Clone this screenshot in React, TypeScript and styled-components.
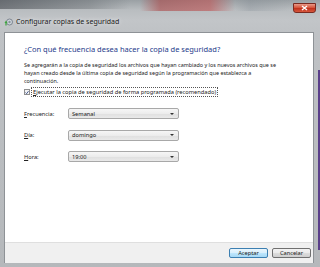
import React from "react";
import styled, { createGlobalStyle } from "styled-components";

const Global = createGlobalStyle`
  html, body { margin: 0; padding: 0; background: #6d7378; }
  * { box-sizing: border-box; }
`;

const Window = styled.div`
  width: 320px;
  height: 267px;
  display: flex;
  flex-direction: column;
  padding: 0 6px 4px 4px;
  font-family: "Noto Sans", "DejaVu Sans", sans-serif;
  background:
    linear-gradient(90deg, rgba(60,64,70,0.55) 0px, rgba(90,95,100,0.35) 90px, rgba(200,200,200,0) 130px) 0 0 / 100% 9px no-repeat,
    linear-gradient(90deg, rgba(0,0,0,0) 140px, rgba(170,60,60,0.55) 160px, rgba(190,80,80,0.6) 210px, rgba(0,0,0,0) 235px, rgba(120,130,140,0.25) 250px, rgba(0,0,0,0) 290px) 0 0 / 100% 11px no-repeat,
    linear-gradient(180deg, #9aa0a4 0px, #b9bdc0 10px, #c2c5c8 20px, #bfc2c5 32px, #b5b8bb 100%);
  position: relative;
  overflow: hidden;
`;

const PurpleStripe = styled.div`
  position: absolute;
  right: 0;
  top: 70px;
  width: 2px;
  height: 180px;
  background: #5a3f8a;
`;

const TitleBar = styled.div`
  height: 32px;
  display: flex;
  align-items: flex-end;
  padding: 0 0 6px 0;
  gap: 3px;
  position: relative;
`;

const TitleText = styled.span`
  font-size: 7px;
  color: #1b1b1b;
  line-height: 9px;
  text-shadow: 0 0 4px rgba(255,255,255,0.9);
`;

const CloseButton = styled.div`
  position: absolute;
  right: -2px;
  top: 3px;
  width: 23px;
  height: 10px;
  border-radius: 0 0 3px 3px;
  border: 1px solid #7a2a20;
  background: linear-gradient(180deg, #e99a88 0%, #d6553c 45%, #c2321c 55%, #d6573e 100%);
  display: flex;
  align-items: center;
  justify-content: center;
`;

const Content = styled.div`
  flex: 1;
  background: #ffffff;
  display: flex;
  flex-direction: column;
  border: 1px solid #8e9296;
  border-bottom: none;
`;

const Main = styled.div`
  flex: 1;
  padding: 11px 10px 0 19px;
  display: flex;
  flex-direction: column;
`;

const Heading = styled.div`
  font-size: 7.5px;
  color: #1e3a8a;
  line-height: 10px;
  margin-bottom: 7px;
`;

const Body = styled.div`
  font-size: 5.4px;
  color: #222;
  line-height: 8px;
  margin-bottom: 3px;
  white-space: nowrap;
`;

const CheckRow = styled.div`
  display: flex;
  align-items: center;
  gap: 2px;
  margin-bottom: 12px;
`;

const CheckBox = styled.div`
  width: 6px;
  height: 6px;
  border: 1px solid #8f8f8f;
  background: #f4f4f4;
  display: flex;
  align-items: center;
  justify-content: center;
`;

const CheckLabel = styled.span`
  font-size: 5.7px;
  color: #222;
  line-height: 8px;
  padding: 0 1px;
  outline: 1px dotted #555;
`;

const FieldRow = styled.div`
  display: flex;
  align-items: center;
  height: 11px;
  margin-bottom: 10.5px;
`;

const FieldLabel = styled.span`
  width: 44px;
  font-size: 5.7px;
  color: #222;
`;

const Select = styled.div`
  width: 111px;
  height: 11px;
  border: 1px solid #a8a8a8;
  border-radius: 2px;
  background: linear-gradient(180deg, #f6f6f6 0%, #ececec 50%, #dfdfdf 51%, #e9e9e9 100%);
  display: flex;
  align-items: center;
  justify-content: space-between;
  padding: 0 4px 0 3px;
  font-size: 5.7px;
  color: #222;
`;

const Arrow = styled.div`
  width: 0;
  height: 0;
  border-left: 2px solid transparent;
  border-right: 2px solid transparent;
  border-top: 2px solid #333;
`;

const Footer = styled.div`
  height: 21px;
  background: #f0f0f0;
  border-top: 1px solid #dfdfdf;
  display: flex;
  align-items: center;
  justify-content: flex-end;
  gap: 4px;
  padding: 0 2px 0 0;
`;

const Button = styled.div<{ $default?: boolean }>`
  width: 39px;
  height: 10px;
  border: 1px solid ${(p) => (p.$default ? "#3c7fb1" : "#707070")};
  border-radius: 2px;
  background: ${(p) =>
    p.$default
      ? "linear-gradient(180deg, #eaf6fd 0%, #d9f0fc 50%, #bee6fd 51%, #a7d9f5 100%)"
      : "linear-gradient(180deg, #f2f2f2 0%, #ebebeb 50%, #dddddd 51%, #cfcfcf 100%)"};
  display: flex;
  align-items: center;
  justify-content: center;
  font-size: 5.7px;
  color: #222;
`;

const U = styled.span`
  text-decoration: underline;
`;

const AppIcon = () => (
  <svg width="9" height="9" viewBox="0 0 9 9">
    <circle cx="5.5" cy="5" r="3" fill="#d0d6dc" stroke="#6a7480" strokeWidth="0.8" />
    <circle cx="5.5" cy="5" r="1.2" fill="#8a949e" />
    <path d="M0.5 6 L2 3.5 L3.5 6 Z" fill="#3ca43c" />
    <rect x="1.4" y="5.5" width="1.2" height="3" fill="#3ca43c" />
  </svg>
);

export default function App() {
  return (
    <>
      <Global />
      <Window>
        <PurpleStripe />
        <TitleBar>
          <AppIcon />
          <TitleText>Configurar copias de seguridad</TitleText>
          <CloseButton>
            <svg width="7" height="6" viewBox="0 0 7 6">
              <path d="M1 1 L6 5 M6 1 L1 5" stroke="#fff" strokeWidth="1.4" />
            </svg>
          </CloseButton>
        </TitleBar>
        <Content>
          <Main>
            <Heading>¿Con qué frecuencia desea hacer la copia de seguridad?</Heading>
            <Body>
              Se agregarán a la copia de seguridad los archivos que hayan cambiado y los nuevos archivos que se
              <br />
              hayan creado desde la última copia de seguridad según la programación que establezca a
              <br />
              continuación.
            </Body>
            <CheckRow>
              <CheckBox>
                <svg width="5" height="5" viewBox="0 0 5 5">
                  <path d="M0.6 2.6 L2 4 L4.4 0.8" stroke="#1f3a7a" strokeWidth="1" fill="none" />
                </svg>
              </CheckBox>
              <CheckLabel>
                <U>E</U>jecutar la copia de seguridad de forma programada (recomendado)
              </CheckLabel>
            </CheckRow>
            <FieldRow>
              <FieldLabel><U>F</U>recuencia:</FieldLabel>
              <Select>Semanal<Arrow /></Select>
            </FieldRow>
            <FieldRow>
              <FieldLabel><U>D</U>ía:</FieldLabel>
              <Select>domingo<Arrow /></Select>
            </FieldRow>
            <FieldRow>
              <FieldLabel><U>H</U>ora:</FieldLabel>
              <Select>19:00<Arrow /></Select>
            </FieldRow>
          </Main>
          <Footer>
            <Button $default>Aceptar</Button>
            <Button>Cancelar</Button>
          </Footer>
        </Content>
      </Window>
    </>
  );
}
